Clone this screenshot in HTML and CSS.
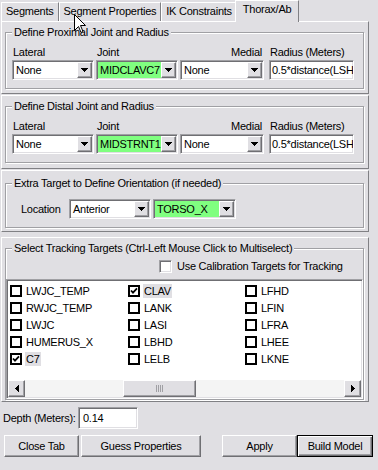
FILE: index.html
```html
<!DOCTYPE html>
<html lang="en">
<head>
    <meta charset="UTF-8">
    <meta name="viewport" content="width=device-width, initial-scale=1.0">
    <title>Thorax/Ab</title>
    <link rel="stylesheet" href="styles.css">
</head>
<body>
    <div class="tabs">
        <div class="tab">Segments</div>
        <div class="tab">Segment Properties</div>
        <div class="tab">IK Constraints</div>
        <div class="tab active">Thorax/Ab</div>
    </div>

    <!-- proximal joint -->
    <div class="panel panel-prox">
        <div class="group">
            <div class="group-title">Define Proximal Joint and Radius</div>
            <div class="joint-grid">
                <span class="lbl">Lateral</span>
                <span class="lbl">Joint</span>
                <span class="lbl medial">Medial</span>
                <span class="lbl radius">Radius (Meters)</span>
                <div class="combo sunken"><span class="value">None</span><span class="drop raised"><svg width="7" height="4" viewBox="0 0 7 4"><path d="M0 0H7V1H6V2H5V3H4V4H3V3H2V2H1V1H0Z"/></svg></span></div>
                <div class="combo sunken"><span class="value green">MIDCLAVC7</span><span class="drop raised"><svg width="7" height="4" viewBox="0 0 7 4"><path d="M0 0H7V1H6V2H5V3H4V4H3V3H2V2H1V1H0Z"/></svg></span></div>
                <div class="combo sunken"><span class="value">None</span><span class="drop raised"><svg width="7" height="4" viewBox="0 0 7 4"><path d="M0 0H7V1H6V2H5V3H4V4H3V3H2V2H1V1H0Z"/></svg></span></div>
                <div class="textbox sunken radius">0.5*distance(LSH</div>
            </div>
        </div>
    </div>

    <!-- distal joint -->
    <div class="panel panel-dist">
        <div class="group">
            <div class="group-title">Define Distal Joint and Radius</div>
            <div class="joint-grid">
                <span class="lbl">Lateral</span>
                <span class="lbl">Joint</span>
                <span class="lbl medial">Medial</span>
                <span class="lbl radius">Radius (Meters)</span>
                <div class="combo sunken"><span class="value">None</span><span class="drop raised"><svg width="7" height="4" viewBox="0 0 7 4"><path d="M0 0H7V1H6V2H5V3H4V4H3V3H2V2H1V1H0Z"/></svg></span></div>
                <div class="combo sunken"><span class="value green">MIDSTRNT1</span><span class="drop raised"><svg width="7" height="4" viewBox="0 0 7 4"><path d="M0 0H7V1H6V2H5V3H4V4H3V3H2V2H1V1H0Z"/></svg></span></div>
                <div class="combo sunken"><span class="value">None</span><span class="drop raised"><svg width="7" height="4" viewBox="0 0 7 4"><path d="M0 0H7V1H6V2H5V3H4V4H3V3H2V2H1V1H0Z"/></svg></span></div>
                <div class="textbox sunken radius">0.5*distance(LSH</div>
            </div>
        </div>
    </div>

    <!-- orientation -->
    <div class="panel panel-extra">
        <div class="group">
            <div class="group-title">Extra Target to Define Orientation (if needed)</div>
            <div class="loc-row">
                <span class="loc-label">Location</span>
                <div class="combo sunken w82"><span class="value">Anterior</span><span class="drop raised"><svg width="7" height="4" viewBox="0 0 7 4"><path d="M0 0H7V1H6V2H5V3H4V4H3V3H2V2H1V1H0Z"/></svg></span></div>
                <div class="combo sunken w83"><span class="value green">TORSO_X</span><span class="drop raised"><svg width="7" height="4" viewBox="0 0 7 4"><path d="M0 0H7V1H6V2H5V3H4V4H3V3H2V2H1V1H0Z"/></svg></span></div>
            </div>
        </div>
    </div>

    <!-- tracking targets -->
    <div class="panel panel-track">
        <div class="group">
            <div class="group-title">Select Tracking Targets (Ctrl-Left Mouse Click to Multiselect)</div>
            <div class="cal-row">
                <span class="cal-box sunken"></span>
                <span>Use Calibration Targets for Tracking</span>
            </div>
            <div class="listbox sunken">
                <div class="items">
                    <div class="item"><span class="check"></span><span>LWJC_TEMP</span></div>
                    <div class="item"><span class="check"></span><span>RWJC_TEMP</span></div>
                    <div class="item"><span class="check"></span><span>LWJC</span></div>
                    <div class="item"><span class="check"></span><span>HUMERUS_X</span></div>
                    <div class="item sel"><span class="check"><svg width="8" height="8" viewBox="0 0 8 8"><path d="M1 3.5L3 5.6L7 1.4" fill="none" stroke="#000" stroke-width="1.8"/></svg></span><span>C7</span></div>
                    <div class="item sel"><span class="check"><svg width="8" height="8" viewBox="0 0 8 8"><path d="M1 3.5L3 5.6L7 1.4" fill="none" stroke="#000" stroke-width="1.8"/></svg></span><span>CLAV</span></div>
                    <div class="item"><span class="check"></span><span>LANK</span></div>
                    <div class="item"><span class="check"></span><span>LASI</span></div>
                    <div class="item"><span class="check"></span><span>LBHD</span></div>
                    <div class="item"><span class="check"></span><span>LELB</span></div>
                    <div class="item"><span class="check"></span><span>LFHD</span></div>
                    <div class="item"><span class="check"></span><span>LFIN</span></div>
                    <div class="item"><span class="check"></span><span>LFRA</span></div>
                    <div class="item"><span class="check"></span><span>LHEE</span></div>
                    <div class="item"><span class="check"></span><span>LKNE</span></div>
                </div>
                <div class="hscroll">
                    <span class="sb-btn raised"><svg width="4" height="7" viewBox="0 0 4 7"><path d="M4 0V7H3V6H2V5H1V4H0V3H1V2H2V1H3V0Z"/></svg></span>
                    <div class="track">
                        <span class="thumb raised"><svg width="7" height="7" viewBox="0 0 7 7"><path d="M0 0H1V7H0ZM2 0H3V7H2ZM4 0H5V7H4ZM6 0H7V7H6Z" fill="#a0a0a4"/></svg></span>
                    </div>
                    <span class="sb-btn raised"><svg width="4" height="7" viewBox="0 0 4 7"><path d="M0 0V7H1V6H2V5H3V4H4V3H3V2H2V1H1V0Z"/></svg></span>
                </div>
            </div>
        </div>
    </div>

    <div class="depth-row">
        <span class="depth-label">Depth (Meters):</span>
        <div class="textbox sunken depth">0.14</div>
    </div>

    <div class="buttons">
        <div class="btn raised">Close Tab</div>
        <div class="btn raised guess">Guess Properties</div>
        <div class="btn raised apply">Apply</div>
        <div class="btn raised default">Build Model</div>
    </div>

    <!-- mouse pointer from the capture -->
    <svg class="cursor" width="12" height="19" viewBox="0 0 12 19"><path d="M0.5 0.5V16.5L4.5 12.5L7 18.5L9 17.5L6.5 11.5H11.5Z" fill="#fff" stroke="#000"/></svg>
</body>
</html>
```

FILE: styles.css
```css
* {
    box-sizing: border-box;
}
body {
    margin: 0;
    width: 378px;
    height: 470px;
    position: relative;
    overflow: hidden;
    background-color: #e0dfe3;
    font-family: "Liberation Sans", Arial, sans-serif;
    font-size: 11px;
    line-height: 13px;
    letter-spacing: -0.25px;
    color: #000;
}
.raised {
    background-color: #e0dfe3;
    border: 1px solid;
    border-color: #fff #6f6f73 #6f6f73 #fff;
    box-shadow: inset -1px -1px 0 #a0a0a4;
}
.sunken {
    background-color: #fff;
    border: 1px solid;
    border-color: #a0a0a4 #fff #fff #a0a0a4;
    box-shadow: inset 1px 1px 0 #6f6f73, inset -1px -1px 0 #e0dfe3;
    padding: 1px;
}

/* tabs */
.tabs {
    display: flex;
    align-items: flex-end;
    height: 21px;
    padding-left: 1px;
}
.tab {
    height: 19px;
    padding: 2px 4px 0;
    border-top: 1px solid #fff;
    border-left: 1px solid #fff;
    border-right: 1px solid #808084;
    white-space: nowrap;
}
.tab.active {
    position: relative;
    z-index: 1;
    height: 22px;
    margin: 0 0 -1px -2px;
    padding: 2px 7px 0;
    background-color: #e0dfe3;
}

/* framed sections */
.panel {
    width: 368px;
    margin-left: 1px;
    padding: 10px 4px 0 3px;
    border: 1px solid;
    border-color: #fff #808084 #808084 #fff;
}
.panel-prox {
    height: 73px;
}
.panel-dist {
    height: 74px;
    margin-top: 1px;
}
.panel-extra {
    height: 62px;
    margin-top: 1px;
    padding-top: 12px;
}
.panel-track {
    height: 165px;
    margin-top: 5px;
}
.group {
    border: 1px solid #a0a0a4;
    box-shadow: 1px 1px 0 #fff, inset 1px 1px 0 #fff;
}
.group-title {
    width: max-content;
    margin: -7px 0 0 6px;
    padding: 0 2px;
    background-color: #e0dfe3;
}

/* joint rows */
.joint-grid {
    display: grid;
    grid-template-columns: 82px 82px 84px 88px;
    column-gap: 2px;
    row-gap: 1px;
    margin: 7px 0 8px 6px;
}
.lbl {
    padding-left: 1px;
}
.lbl.medial {
    justify-self: end;
    padding-right: 2px;
}
.radius {
    margin-left: 3px;
}
.lbl.radius {
    margin-left: 4px;
    padding-left: 0;
}
.combo {
    display: flex;
    height: 20px;
}
.combo .value {
    flex: 1;
    padding-left: 2px;
    line-height: 16px;
    white-space: nowrap;
    overflow: hidden;
}
.combo .value.green {
    background-color: #80ff80;
}
.combo .drop {
    width: 15px;
    display: flex;
    align-items: center;
    justify-content: center;
}
.textbox {
    height: 20px;
    padding-left: 2px;
    line-height: 16px;
    white-space: nowrap;
    overflow: hidden;
}

/* orientation row */
.loc-row {
    display: flex;
    gap: 2px;
    margin: 9px 0 8px 15px;
}
.loc-label {
    width: 46px;
    line-height: 20px;
}
.w82 {
    width: 82px;
}
.w83 {
    width: 83px;
}

/* tracking list */
.cal-row {
    display: flex;
    align-items: center;
    gap: 5px;
    height: 13px;
    margin: 5px 0 0 153px;
}
.cal-box {
    width: 13px;
    height: 13px;
}
.listbox {
    height: 120px;
    margin-top: 6px;
    display: flex;
    flex-direction: column;
}
.items {
    flex: 1;
    display: grid;
    grid-template-columns: 118px 117px 117px;
    grid-template-rows: repeat(5, 17px);
    grid-auto-flow: column;
    align-content: start;
    padding: 1px 0 0 2px;
}
.item {
    display: flex;
    align-items: center;
}
.check {
    width: 12px;
    height: 12px;
    margin-right: 3px;
    border: 2px solid #000;
    background-color: #fff;
    display: flex;
    align-items: center;
    justify-content: center;
}
.item span + span {
    padding: 0 1px;
    line-height: 14px;
}
.item.sel span + span {
    background-color: #e0dfe3;
}
.hscroll {
    display: flex;
    height: 17px;
    background-color: #f4f4f4;
}
.sb-btn {
    width: 17px;
    display: flex;
    align-items: center;
    justify-content: center;
}
.track {
    flex: 1;
    display: flex;
}
.thumb {
    width: 73px;
    margin-left: 98px;
    display: flex;
    align-items: center;
    justify-content: center;
}

/* bottom controls */
.depth-row {
    display: flex;
    align-items: center;
    margin: 5px 0 0 3px;
}
.depth-label {
    width: 75px;
}
.textbox.depth {
    width: 60px;
    height: 22px;
    padding-left: 4px;
    line-height: 18px;
}
.buttons {
    display: flex;
    margin-top: 6px;
    padding-left: 4px;
}
.btn {
    width: 75px;
    height: 22px;
    display: flex;
    align-items: center;
    justify-content: center;
}
.btn.guess {
    width: 120px;
    margin-left: 2px;
}
.btn.apply {
    margin-left: 21px;
}
.btn.default {
    width: 76px;
    border-color: #000;
    box-shadow: inset 1px 1px 0 #fff, inset -1px -1px 0 #6f6f73, inset -2px -2px 0 #a0a0a4;
}
.cursor {
    position: absolute;
    left: 74px;
    top: 14px;
}
```
